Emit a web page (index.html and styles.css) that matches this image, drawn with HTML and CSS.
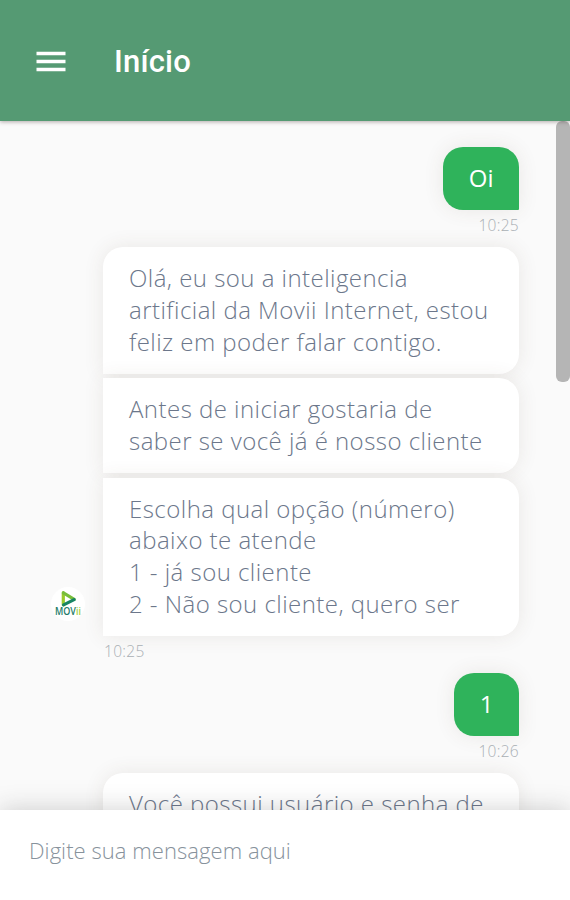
FILE: index.html
```
<!DOCTYPE html>
<html lang="pt-BR">
<head>
  <meta charset="UTF-8" />
  <meta name="viewport" content="width=device-width, initial-scale=1.0"/>
  <title>Movii Internet - Início</title>
  <link rel="stylesheet" href="styles.css">
</head>
<body>

  <!-- Top bar -->
  <header>
    <svg class="menu" viewBox="0 0 30 22" aria-label="Menu">
      <path d="M0.5 2.5h29M0.5 10.5h29M0.5 18.5h29" />
    </svg>
    <h1>Início</h1>
  </header>

  <!-- Conversation -->
  <main class="chat">
    <div class="messages">
      <div class="group sent">
        <div class="bubble">Oi</div>
        <span class="time">10:25</span>
      </div>

      <div class="group received">
        <div class="row">
          <svg class="avatar" viewBox="0 0 34 34" aria-label="Movii">
            <circle cx="17" cy="17" r="17" fill="#fff" />
            <path d="M12.3 5.8v12" stroke="#9bcb2d" stroke-width="3.2" stroke-linecap="round" />
            <path d="M12.4 5.8L23.2 12.4" stroke="#78bd3b" stroke-width="3.2" stroke-linecap="round" />
            <path d="M12.6 17.9l10.5-5.3" stroke="#178563" stroke-width="3.2" stroke-linecap="round" />
            <text x="4" y="28.2" textLength="26" lengthAdjust="spacingAndGlyphs" fill="#237b69">MOV<tspan fill="#a6cf36">ii</tspan></text>
          </svg>
          <div class="bubbles">
            <div class="bubble">Olá, eu sou a inteligencia<br>artificial da Movii Internet, estou<br>feliz em poder falar contigo.</div>
            <div class="bubble">Antes de iniciar gostaria de<br>saber se você já é nosso cliente</div>
            <div class="bubble">Escolha qual opção (número)<br>abaixo te atende<br>1 - já sou cliente<br>2 - Não sou cliente, quero ser</div>
          </div>
        </div>
        <span class="time">10:25</span>
      </div>

      <div class="group sent">
        <div class="bubble">1</div>
        <span class="time">10:26</span>
      </div>

      <div class="group received">
        <div class="row">
          <div class="bubbles">
            <div class="bubble">Você possui usuário e senha de</div>
          </div>
        </div>
      </div>
    </div>
    <div class="scrollbar"></div>
  </main>

  <!-- Message input -->
  <footer>
    <input type="text" placeholder="Digite sua mensagem aqui">
  </footer>

</body>
</html>
```

FILE: styles.css
```
* {
  box-sizing: border-box;
}

body {
  font-family: "Open Sans", "Noto Sans", sans-serif;
  font-weight: 350;
  background-color: #fafafa;
  margin: 0;
  height: 100vh;
  display: flex;
  flex-direction: column;
  overflow: hidden;
}

header {
  background-color: #559a73;
  height: 121px;
  padding: 2px 36px 0;
  display: flex;
  flex-shrink: 0;
  align-items: center;
  gap: 48px;
  z-index: 1;
  box-shadow: 0 1px 4px rgba(70, 50, 50, 0.4);
}

.menu {
  width: 30px;
  height: 22px;
  fill: none;
  stroke: #fff;
  stroke-width: 3.4;
}

header h1 {
  margin: 0;
  font-family: Roboto, sans-serif;
  font-size: 31px;
  font-weight: 500;
  letter-spacing: 0.2px;
  color: #fff;
}

.chat {
  flex: 1;
  min-height: 0;
  display: flex;
  justify-content: space-between;
  overflow: hidden;
}

.messages {
  width: 519px;
  padding: 26px 0 0 51px;
}

.group {
  display: flex;
  flex-direction: column;
}

.sent {
  align-items: flex-end;
}

.row {
  display: flex;
  align-items: flex-end;
}

.avatar {
  width: 34px;
  height: 34px;
  margin: 0 0 15px;
  fill: none;
  font: 600 10.5px "Open Sans", sans-serif;
}

.bubbles {
  width: 416px;
  margin-left: auto;
  display: flex;
  flex-direction: column;
  gap: 4.6px;
}

.bubble {
  padding: 15.1px 26px 16.3px;
  font-size: 24px;
  line-height: 31.7px;
  letter-spacing: 0.46px;
  white-space: nowrap;
  box-shadow: 0 0 20px rgba(90, 70, 50, 0.1);
}

.received .bubble {
  background-color: #fff;
  color: #6c778b;
  border-radius: 0 20px 20px 0;
}

.received .bubble:first-child {
  border-top-left-radius: 20px;
}

.sent .bubble {
  padding-left: 25.5px;
  padding-right: 25.5px;
  background-color: #2fb35b;
  color: #fff;
  font-weight: 400;
  letter-spacing: 0;
  border-radius: 20px 20px 1px 20px;
}

.time {
  height: 37px;
  padding-top: 5px;
  font-size: 15.5px;
  line-height: 21px;
  letter-spacing: 0.3px;
  color: #a9afb4;
}

.received .time {
  padding-left: 53px;
}

.scrollbar {
  width: 14px;
  height: 261px;
  border-radius: 6px;
  background-color: #b5b5b5;
}

footer {
  height: 90px;
  flex-shrink: 0;
  background-color: #fff;
  padding: 23px 29px;
  z-index: 1;
  box-shadow: 0 0 24px rgba(40, 40, 40, 0.22);
}

footer input {
  width: 100%;
  height: 34px;
  padding: 0;
  border: none;
  outline: none;
  background: none;
  font: 350 22px "Open Sans", sans-serif;
  letter-spacing: 0.06px;
}

footer input::placeholder {
  color: #87929c;
}
```
